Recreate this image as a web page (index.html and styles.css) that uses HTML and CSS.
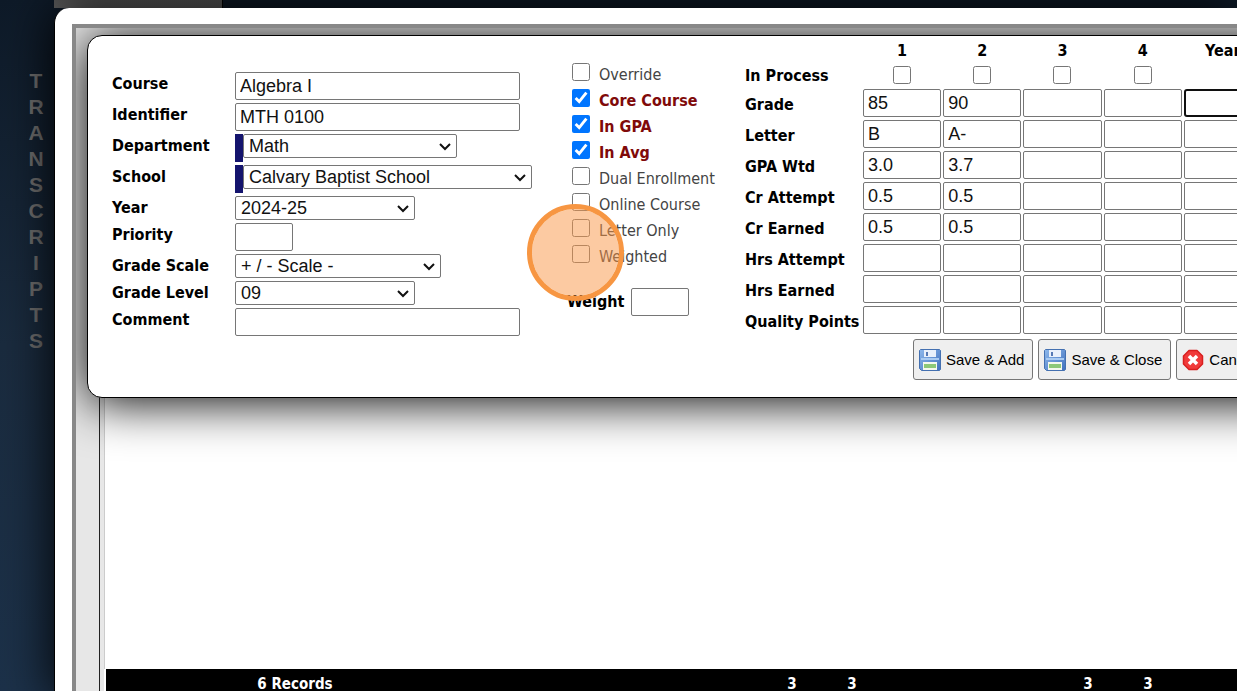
FILE: index.html
```
<!DOCTYPE html>
<html lang="en">
<head>
<meta charset="UTF-8">
<meta name="viewport" content="width=device-width, initial-scale=1.0">
  <title>Transcripts</title>
  <link rel="stylesheet" href="styles.css">
</head>
<body>

<div class="sidebar">
  <span>T</span><span>R</span><span>A</span><span>N</span><span>S</span><span>C</span><span>R</span><span>I</span><span>P</span><span>T</span><span>S</span>
</div>

<div class="main">
  <div class="tab"></div>
  <div class="window">
    <div class="frame">
      <div class="sheet">
        <div class="records"></div>
        <div class="totals">
          <span>6 Records</span><span></span><span>3</span><span>3</span><span></span><span>3</span><span>3</span>
        </div>
      </div>

      <form class="popup">
        <div class="details">
          <label for="course">Course</label>
          <div class="tall"><input type="text" id="course" class="wide" value="Algebra I"></div>
          <label for="identifier">Identifier</label>
          <div class="tall"><input type="text" id="identifier" class="wide" value="MTH 0100"></div>
          <label for="department">Department</label>
          <div class="tall required"><select id="department"><option>Math</option></select></div>
          <label for="school">School</label>
          <div class="tall required"><select id="school"><option>Calvary Baptist School</option></select></div>
          <label for="year">Year</label>
          <div><select id="year"><option>2024-25</option></select></div>
          <label for="priority">Priority</label>
          <div class="tall"><input type="text" id="priority" class="short"></div>
          <label for="scale">Grade Scale</label>
          <div><select id="scale"><option>+ / - Scale -</option></select></div>
          <label for="level">Grade Level</label>
          <div><select id="level"><option>09</option></select></div>
          <label for="comment">Comment</label>
          <div class="tall"><input type="text" id="comment" class="wide"></div>
        </div>

        <div class="options">
          <div class="option"><input type="checkbox" id="override"><label for="override">Override</label></div>
          <div class="option"><input type="checkbox" id="core" checked><label for="core">Core Course</label></div>
          <div class="option"><input type="checkbox" id="ingpa" checked><label for="ingpa">In GPA</label></div>
          <div class="option"><input type="checkbox" id="inavg" checked><label for="inavg">In Avg</label></div>
          <div class="option"><input type="checkbox" id="dual"><label for="dual">Dual Enrollment</label></div>
          <div class="option"><input type="checkbox" id="online"><label for="online">Online Course</label></div>
          <div class="option"><input type="checkbox" id="letteronly"><label for="letteronly">Letter Only</label></div>
          <div class="option"><input type="checkbox" id="weighted"><label for="weighted">Weighted</label></div>
          <div class="weight"><label for="weight">Weight</label><input type="text" id="weight" class="short"></div>
        </div>

        <div class="grades">
          <table>
            <thead>
              <tr><td></td><th>1</th><th>2</th><th>3</th><th>4</th><th>Year</th></tr>
            </thead>
            <tbody>
              <tr class="process">
                <th><label for="p1">In Process</label></th>
                <td><input type="checkbox" id="p1"></td>
                <td><input type="checkbox" aria-label="In Process 2"></td>
                <td><input type="checkbox" aria-label="In Process 3"></td>
                <td><input type="checkbox" aria-label="In Process 4"></td>
                <td></td>
              </tr>
              <tr>
                <th><label for="g1">Grade</label></th>
                <td><input type="text" id="g1" value="85"></td>
                <td><input type="text" aria-label="Grade 2" value="90"></td>
                <td><input type="text" aria-label="Grade 3"></td>
                <td><input type="text" aria-label="Grade 4"></td>
                <td><input type="text" aria-label="Grade Year" class="current"></td>
              </tr>
              <tr>
                <th><label for="l1">Letter</label></th>
                <td><input type="text" id="l1" value="B"></td>
                <td><input type="text" aria-label="Letter 2" value="A-"></td>
                <td><input type="text" aria-label="Letter 3"></td>
                <td><input type="text" aria-label="Letter 4"></td>
                <td><input type="text" aria-label="Letter Year"></td>
              </tr>
              <tr>
                <th><label for="w1">GPA Wtd</label></th>
                <td><input type="text" id="w1" value="3.0"></td>
                <td><input type="text" aria-label="GPA Wtd 2" value="3.7"></td>
                <td><input type="text" aria-label="GPA Wtd 3"></td>
                <td><input type="text" aria-label="GPA Wtd 4"></td>
                <td><input type="text" aria-label="GPA Wtd Year"></td>
              </tr>
              <tr>
                <th><label for="ca1">Cr Attempt</label></th>
                <td><input type="text" id="ca1" value="0.5"></td>
                <td><input type="text" aria-label="Cr Attempt 2" value="0.5"></td>
                <td><input type="text" aria-label="Cr Attempt 3"></td>
                <td><input type="text" aria-label="Cr Attempt 4"></td>
                <td><input type="text" aria-label="Cr Attempt Year"></td>
              </tr>
              <tr>
                <th><label for="ce1">Cr Earned</label></th>
                <td><input type="text" id="ce1" value="0.5"></td>
                <td><input type="text" aria-label="Cr Earned 2" value="0.5"></td>
                <td><input type="text" aria-label="Cr Earned 3"></td>
                <td><input type="text" aria-label="Cr Earned 4"></td>
                <td><input type="text" aria-label="Cr Earned Year"></td>
              </tr>
              <tr>
                <th><label for="ha1">Hrs Attempt</label></th>
                <td><input type="text" id="ha1"></td>
                <td><input type="text" aria-label="Hrs Attempt 2"></td>
                <td><input type="text" aria-label="Hrs Attempt 3"></td>
                <td><input type="text" aria-label="Hrs Attempt 4"></td>
                <td><input type="text" aria-label="Hrs Attempt Year"></td>
              </tr>
              <tr>
                <th><label for="he1">Hrs Earned</label></th>
                <td><input type="text" id="he1"></td>
                <td><input type="text" aria-label="Hrs Earned 2"></td>
                <td><input type="text" aria-label="Hrs Earned 3"></td>
                <td><input type="text" aria-label="Hrs Earned 4"></td>
                <td><input type="text" aria-label="Hrs Earned Year"></td>
              </tr>
              <tr>
                <th><label for="q1">Quality Points</label></th>
                <td><input type="text" id="q1"></td>
                <td><input type="text" aria-label="Quality Points 2"></td>
                <td><input type="text" aria-label="Quality Points 3"></td>
                <td><input type="text" aria-label="Quality Points 4"></td>
                <td><input type="text" aria-label="Quality Points Year"></td>
              </tr>
            </tbody>
          </table>
          <div class="buttons">
            <button type="button">
              <svg width="22" height="22" viewBox="0 0 22 22">
                <defs>
                  <linearGradient id="disk" x1="0" y1="0" x2="1" y2="1">
                    <stop offset="0" stop-color="#8db8ec"/><stop offset="1" stop-color="#3f70bd"/>
                  </linearGradient>
                </defs>
                <path d="M1.500 .5H20.500L21.500 1.500V20.500L20.500 21.500H2.500L.5 19.500V1.500Z" fill="url(#disk)" stroke="#4470b0"/>
                <rect x="5" y="1" width="12" height="7" fill="#e8f0fb"/>
                <rect x="7" y="3" width="2" height="4" fill="#5579b5"/>
                <rect x="2" y="9" width="18" height="2" fill="#a9cbf2"/>
                <rect x="4" y="13" width="14" height="8" fill="#f4f8ee"/>
                <rect x="5" y="15" width="12" height="4" fill="#8cc878"/>
              </svg>
              Save &amp; Add
            </button>
            <button type="button">
              <svg width="22" height="22" viewBox="0 0 22 22">
                <path d="M1.500 .5H20.500L21.500 1.500V20.500L20.500 21.500H2.500L.5 19.500V1.500Z" fill="url(#disk)" stroke="#4470b0"/>
                <rect x="5" y="1" width="12" height="7" fill="#e8f0fb"/>
                <rect x="7" y="3" width="2" height="4" fill="#5579b5"/>
                <rect x="2" y="9" width="18" height="2" fill="#a9cbf2"/>
                <rect x="4" y="13" width="14" height="8" fill="#f4f8ee"/>
                <rect x="5" y="15" width="12" height="4" fill="#8cc878"/>
              </svg>
              Save &amp; Close
            </button>
            <button type="button">
              <svg width="22" height="22" viewBox="0 0 22 22">
                <path d="M7 1.500H15L20.500 7V15L15 20.500H7L1.500 15V7Z" fill="#f03a3a" stroke="#d81f1f" stroke-width="1.500" stroke-linejoin="round"/>
                <path d="M7 7L15 15M15 7L7 15" stroke="#fff" stroke-width="3.500"/>
              </svg>
              Cancel
            </button>
          </div>
        </div>

        <div class="pointer"></div>
      </form>
    </div>
  </div>
</div>

</body>
</html>
```
FILE: styles.css
```
* {
  box-sizing: border-box;
}
body {
  margin: 0;
  height: 100vh;
  overflow: hidden;
  display: flex;
  background: linear-gradient(#0e1a28, #1a2b3e 50%, #1c3149);
  font-family: Tahoma, "DejaVu Sans Condensed", "DejaVu Sans", sans-serif;
  font-size: 16px;
}
.sidebar {
  width: 54px;
  flex: none;
  padding: 68px 0 0 18px;
  display: flex;
  flex-direction: column;
  align-items: center;
  font: bold 21px/26px "Liberation Sans", Arial, sans-serif;
  color: #6e6e6e;
}
.main {
  flex: 1;
  min-width: 0;
}
.tab {
  width: 169px;
  height: 8px;
  background: linear-gradient(#5a5a5a, #666);
  border-right: 1px solid #000;
}
.window {
  height: 100vh;
  padding: 16px 0 0 17px;
  background: #fff;
  border-left: 1px solid #000;
  border-radius: 15px 0 0 0;
  box-shadow: 0 0 50px #000;
}
.frame {
  position: relative;
  overflow: hidden;
  height: 100%;
  padding: 40px 0 0 23px;
  background: #e7e7e7;
  border: solid #888;
  border-width: 4px 0 0 4px;
}
.sheet {
  height: 100%;
  padding-left: 4px;
  border-left: 1px solid #222;
  display: flex;
  flex-direction: column;
}
.records {
  flex: 1;
  background: #fff;
  border-left: 1px solid #ccc;
}
.totals {
  height: 30px;
  border-left: 2px solid #fff;
  background: #000;
  color: #fff;
  font-size: 15px;
  font-weight: bold;
  line-height: 30px;
  text-align: center;
  display: grid;
  grid-template-columns: 378px 278px 60px 60px 176px 60px 60px;
}

/* course editor, sits over the transcript */
.popup {
  position: absolute;
  top: 7px;
  left: 11px;
  right: -60px;
  padding: 0 0 17px 24px;
  background: #fff;
  border: 1px solid #000;
  border-radius: 15px;
  box-shadow: 0 4px 50px #000;
  display: flex;
}
.popup label, .popup th {
  font-weight: bold;
  white-space: nowrap;
}
input[type="text"], select {
  display: block;
  margin: 0;
  border: 1px solid #767676;
  border-radius: 2px;
  background: #fff;
  color: #111;
  font: 18px "Liberation Sans", Arial, sans-serif;
}
input[type="text"] {
  height: 28px;
  padding: 0 4px;
}
input[type="checkbox"] {
  width: 18px;
  height: 18px;
  margin: 0;
}
select {
  height: 24px;
  padding: 0 20px 0 5px;
  appearance: none;
  background: #fff url("data:image/svg+xml,%3Csvg xmlns='http://www.w3.org/2000/svg' width='14' height='9'%3E%3Cpath d='M2 2L7 7L12 2' fill='none' stroke='%23111' stroke-width='2'/%3E%3C/svg%3E") no-repeat right 4px center;
}
.details {
  flex: none;
  padding-top: 36px;
  display: grid;
  grid-template-columns: 123px 297px;
  row-gap: 3px;
  align-content: start;
}
.details label {
  line-height: 23px;
  height: 23px;
}
.tall {
  height: 28px;
}
.required {
  border-left: 8px solid #14146e;
}
.wide {
  width: 285px;
}
.popup .short {
  width: 58px;
}
#department {
  width: 214px;
}
#school {
  width: 289px;
}
#year, #level {
  width: 180px;
}
#scale {
  width: 206px;
}
.options {
  width: 178px;
  flex: none;
  margin-left: 35px;
  padding-top: 27px;
}
.option {
  height: 26px;
  padding-left: 5px;
  display: flex;
  gap: 9px;
}
.option label {
  font-weight: normal;
  line-height: 24px;
  color: #444;
}
.option input:checked + label {
  font-weight: bold;
  color: #800a0a;
}
.weight {
  margin-top: 17px;
  display: flex;
  line-height: 28px;
}
.weight label {
  width: 64px;
}
.grades {
  flex: none;
}
table {
  table-layout: fixed;
  width: 519px;
  border-collapse: collapse;
}
td, th {
  height: 31px;
  padding: 0 2px 0 0;
  text-align: center;
  vertical-align: top;
  line-height: 31px;
}
thead td {
  width: 118px;
}
thead td, thead th {
  height: 30px;
  line-height: 30px;
}
tbody th {
  text-align: left;
}
td input[type="text"] {
  width: 100%;
}
.process th, .process td {
  height: 23px;
  line-height: 20px;
}
.process input {
  display: block;
  margin: 0 auto;
}
td .current {
  border: 2px solid #101010;
  border-radius: 3px;
}
.buttons {
  margin: 2px 0 0 168px;
  display: flex;
  gap: 5px;
}
button {
  height: 41px;
  padding: 0 8px 0 5px;
  border: 1px solid #767676;
  border-radius: 3px;
  background: #efefef;
  color: #000;
  font: 15px "Liberation Sans", Arial, sans-serif;
  white-space: nowrap;
  display: flex;
  align-items: center;
  gap: 5px;
}
/* click marker */
.pointer {
  position: absolute;
  top: 168px;
  left: 439px;
  width: 97px;
  height: 97px;
  border: 5px solid #f79642;
  border-radius: 50%;
  background: rgba(250, 150, 70, 0.5);
  background-clip: padding-box;
  pointer-events: none;
}
```
